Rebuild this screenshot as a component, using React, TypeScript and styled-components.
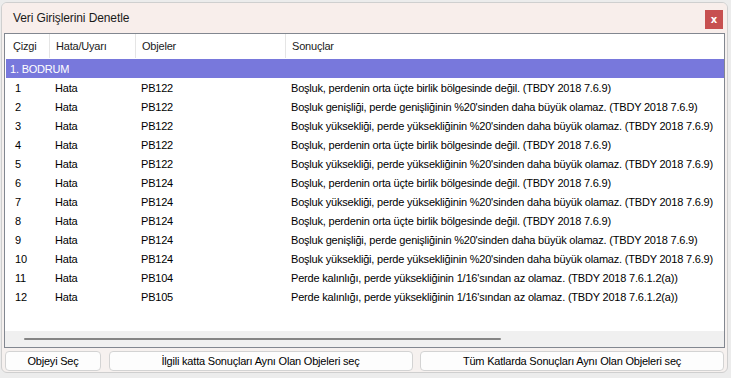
import React from "react";
import styled, { createGlobalStyle } from "styled-components";

const Global = createGlobalStyle`
  html, body { margin: 0; padding: 0; }
  body {
    background: #ececec;
    font-family: "Liberation Sans", Arial, sans-serif;
    letter-spacing: -0.2px;
    width: 731px;
    height: 378px;
    overflow: hidden;
  }
`;

const Window = styled.div`
  margin: 2px 0 0 1px;
  width: 727px;
  height: 371px;
  box-sizing: border-box;
  border: 1px solid #cfcfcf;
  border-radius: 6px;
  background: #f6f1ef;
  display: flex;
  flex-direction: column;
  overflow: hidden;
`;

const TitleBar = styled.div`
  height: 30px;
  flex: none;
  display: flex;
  align-items: center;
  justify-content: space-between;
  padding: 0 4px 0 11px;
  background: #f8eeeb;
`;

const Title = styled.span`
  font-family: "Liberation Sans", Arial, sans-serif;
  font-size: 12px;
  letter-spacing: -0.1px;
  color: #1a1a1a;
`;

const CloseButton = styled.div`
  width: 18px;
  height: 19px;
  background: #c75050;
  color: #fff;
  font-family: "DejaVu Sans", sans-serif;
  font-weight: bold;
  font-size: 10px;
  display: flex;
  align-items: center;
  justify-content: center;
  margin-top: 2px;
`;

const ListBox = styled.div`
  margin: 0 2px 0 2px;
  height: 315px;
  flex: none;
  box-sizing: border-box;
  border: 1px solid #828790;
  background: #fff;
  display: flex;
  flex-direction: column;
`;

const Columns = "45px 86px 150px 1fr";

const HeaderRow = styled.div`
  display: grid;
  grid-template-columns: ${Columns};
  height: 24px;
  flex: none;
`;

const HeaderCell = styled.div<{ $pad: number }>`
  display: flex;
  align-items: center;
  padding-left: ${(p) => p.$pad}px;
  font-size: 11px;
  color: #1a1a1a;
  border-right: 1px solid #e5e5e5;
  &:last-child { border-right: none; }
`;

const Body = styled.div`
  flex: 1;
  padding: 1px 0 0 1px;
  overflow: hidden;
`;

const GroupRow = styled.div`
  height: 19px;
  background: #7878dc;
  color: #fff;
  font-size: 11px;
  display: flex;
  align-items: center;
  padding-left: 4px;
`;

const Row = styled.div`
  display: grid;
  grid-template-columns: ${Columns};
  height: 19px;
  align-items: center;
  font-size: 11px;
  color: #000;
  white-space: nowrap;
`;

const Cell = styled.div<{ $pad: number }>`
  padding-left: ${(p) => p.$pad}px;
`;

const ScrollBar = styled.div`
  height: 16px;
  flex: none;
  background: #f0f0f0;
  display: flex;
  align-items: center;
  padding-left: 19px;
`;

const Thumb = styled.div`
  width: 477px;
  height: 2px;
  background: #858585;
  border-radius: 1px;
`;

const ButtonBar = styled.div`
  display: flex;
  justify-content: space-between;
  padding: 3px 3px 0 3px;
`;

const Button = styled.div<{ $w: number }>`
  width: ${(p) => p.$w}px;
  height: 20px;
  box-sizing: border-box;
  border: 1px solid #d3d3d3;
  border-radius: 4px;
  background: #fdfdfd;
  display: flex;
  align-items: center;
  justify-content: center;
  font-size: 11px;
  color: #000;
`;

type Item = { n: number; obj: string; msg: string };

const M1 = "Boşluk, perdenin orta üçte birlik bölgesinde değil. (TBDY 2018 7.6.9)";
const M2 = "Boşluk genişliği, perde genişliğinin %20'sinden daha büyük olamaz. (TBDY 2018 7.6.9)";
const M3 = "Boşluk yüksekliği, perde yüksekliğinin %20'sinden daha büyük olamaz. (TBDY 2018 7.6.9)";
const M4 = "Perde kalınlığı, perde yüksekliğinin 1/16'sından az olamaz. (TBDY 2018 7.6.1.2(a))";

const items: Item[] = [
  { n: 1, obj: "PB122", msg: M1 },
  { n: 2, obj: "PB122", msg: M2 },
  { n: 3, obj: "PB122", msg: M3 },
  { n: 4, obj: "PB122", msg: M1 },
  { n: 5, obj: "PB122", msg: M3 },
  { n: 6, obj: "PB124", msg: M1 },
  { n: 7, obj: "PB124", msg: M3 },
  { n: 8, obj: "PB124", msg: M1 },
  { n: 9, obj: "PB124", msg: M2 },
  { n: 10, obj: "PB124", msg: M3 },
  { n: 11, obj: "PB104", msg: M4 },
  { n: 12, obj: "PB105", msg: M4 },
];

export default function App() {
  return (
    <>
      <Global />
      <Window>
        <TitleBar>
          <Title>Veri Girişlerini Denetle</Title>
          <CloseButton>x</CloseButton>
        </TitleBar>
        <ListBox>
          <HeaderRow>
            <HeaderCell $pad={8}>Çizgi</HeaderCell>
            <HeaderCell $pad={6}>Hata/Uyarı</HeaderCell>
            <HeaderCell $pad={6}>Objeler</HeaderCell>
            <HeaderCell $pad={6}>Sonuçlar</HeaderCell>
          </HeaderRow>
          <Body>
            <GroupRow>1. BODRUM</GroupRow>
            {items.map((it) => (
              <Row key={it.n}>
                <Cell $pad={9}>{it.n}</Cell>
                <Cell $pad={4}>Hata</Cell>
                <Cell $pad={4}>{it.obj}</Cell>
                <Cell $pad={4}>{it.msg}</Cell>
              </Row>
            ))}
          </Body>
          <ScrollBar>
            <Thumb />
          </ScrollBar>
        </ListBox>
        <ButtonBar>
          <Button $w={96}>Objeyi Seç</Button>
          <Button $w={304}>İlgili katta Sonuçları Aynı Olan Objeleri seç</Button>
          <Button $w={304}>Tüm Katlarda Sonuçları Aynı Olan Objeleri seç</Button>
        </ButtonBar>
      </Window>
    </>
  );
}
